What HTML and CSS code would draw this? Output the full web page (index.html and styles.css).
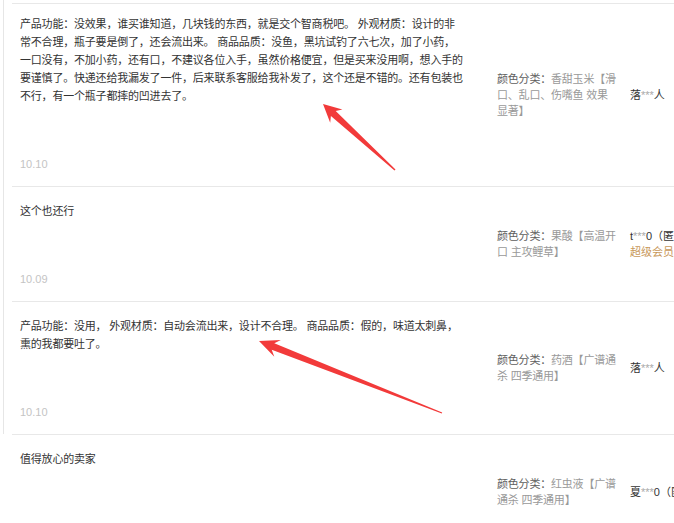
FILE: index.html
```html
<!DOCTYPE html>
<html lang="zh-CN">
<head>
<meta charset="utf-8">
<title>评价列表</title>
<link rel="stylesheet" href="styles.css">
</head>
<body>
<div class="page">
  <div class="list">
    <div class="row">
      <div class="main">
        <div class="content">产品功能：没效果，谁买谁知道，几块钱的东西，就是交个智商税吧。 外观材质：设计的非常不合理，瓶子要是倒了，还会流出来。 商品品质：没鱼，黑坑试钓了六七次，加了小药，一口没有，不加小药，还有口，不建议各位入手，虽然价格便宜，但是买来没用啊，想入手的要谨慎了。快递还给我漏发了一件，后来联系客服给我补发了，这个还是不错的。还有包装也不行，有一个瓶子都摔的凹进去了。</div>
        <div class="date">10.10</div>
      </div>
      <div class="sku"><span class="label">颜色分类：</span><span class="value">香甜玉米【滑口、乱口、伤嘴鱼 效果显著】</span></div>
      <div class="user"><div class="nick">落<span class="mask">***</span>人</div></div>
    </div>
    <div class="row">
      <div class="main">
        <div class="content">这个也还行</div>
        <div class="date">10.09</div>
      </div>
      <div class="sku"><span class="label">颜色分类：</span><span class="value">果酸【高温开口 主攻鲤草】</span></div>
      <div class="user"><div class="nick">t<span class="mask">***</span>0（匿名）</div><div class="vip">超级会员</div></div>
    </div>
    <div class="row">
      <div class="main">
        <div class="content">产品功能：没用， 外观材质：自动会流出来，设计不合理。 商品品质：假的，味道太刺鼻，熏的我都要吐了。</div>
        <div class="date">10.10</div>
      </div>
      <div class="sku"><span class="label">颜色分类：</span><span class="value">药酒【广谱通杀 四季通用】</span></div>
      <div class="user"><div class="nick">落<span class="mask">***</span>人</div></div>
    </div>
  </div>
  <div class="row row-last">
    <div class="main">
      <div class="content">值得放心的卖家</div>
      <div class="date">10.08</div>
    </div>
    <div class="sku"><span class="label">颜色分类：</span><span class="value">红虫液【广谱通杀 四季通用】</span></div>
    <div class="user"><div class="nick">夏<span class="mask">***</span>0（匿名）</div></div>
  </div>

  <svg class="arrows" width="674" height="523" viewBox="0 0 674 523" aria-hidden="true">
    <polygon fill="#f23a3a" points="323,104 330.2,122.8 330.9,116.1 394.5,170.5 395.5,169.5 335.7,110.9 342.4,109.6"/>
    <polygon fill="#f23a3a" points="259,341 274.3,356.7 271.7,349.8 441.8,413.6 442.2,412.4 274.3,343.2 280.9,339.9"/>
  </svg>
</div>
</body>
</html>
```
FILE: styles.css
```css
html, body {
  margin: 0;
  padding: 0;
  overflow: hidden;
  background: #fff;
}

.page {
  position: relative;
  width: 674px;
  height: 523px;
  overflow: hidden;
  font-family: "Liberation Sans", "Noto Sans CJK SC", sans-serif;
  font-size: 11px;
  letter-spacing: -0.2px;
  color: #333;
}

.list {
  margin-left: 3px;
  padding-top: 3px;
  border-left: 1px solid #e6e6e6;
}

.row {
  display: flex;
  align-items: center;
  margin-left: 8px;
  border-top: 1px solid #e8e8e8;
}

.row-last {
  margin-left: 12px;
}

.main {
  flex: 0 0 444px;
  align-self: stretch;
  padding: 15px 0 14px 8px;
  margin-right: 33px;
}

.row:first-child .main {
  padding-top: 11px;
}

.content {
  line-height: 18px;
  color: #333;
}

.date {
  margin-top: 51px;
  line-height: 16px;
  color: #c4c4c4;
  letter-spacing: 0;
}

.sku {
  flex: 0 0 120px;
  line-height: 16px;
}

.sku .label {
  color: #5e5e5e;
}

.sku .value {
  color: #999;
}

.user {
  margin-left: 13px;
  white-space: nowrap;
  line-height: 16px;
  letter-spacing: 0;
}

.nick {
  color: #333;
}

.mask {
  color: #aaa;
}

.vip {
  color: #c8985a;
}

.arrows {
  position: absolute;
  left: 0;
  top: 0;
  pointer-events: none;
}
```
